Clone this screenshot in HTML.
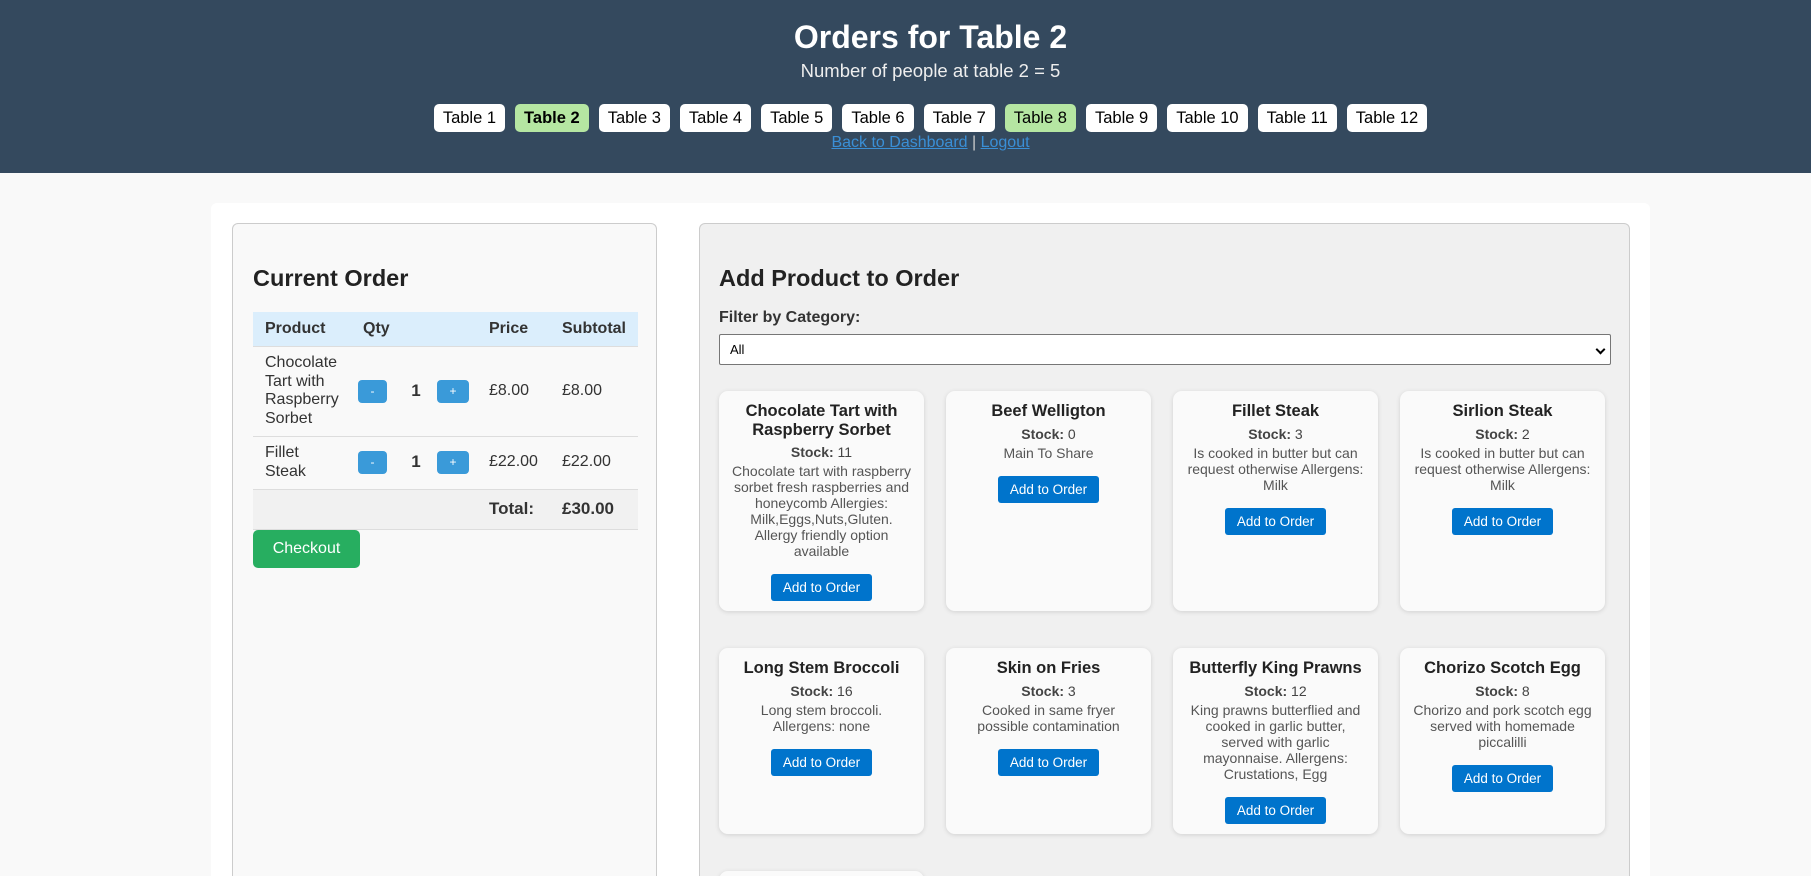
<!DOCTYPE html>
<html style="width:1811px;height:876px;overflow:hidden"><head><meta charset="utf-8">
<style>
*{box-sizing:border-box;margin:0;padding:0}
body{width:1811px;height:876px;overflow:hidden;background:#f9f9f9;font-family:"Liberation Sans",Arial,sans-serif;color:#333;position:relative}
header{background:#34495e;height:173px;text-align:center;color:#fff;padding-top:18px;padding-left:50px}
h1{font-size:32px;line-height:38px;font-weight:bold}
.sub{font-size:18.5px;line-height:22px;margin-top:4px;color:#eee}
.tabs{display:flex;justify-content:center;gap:10px;margin-top:22px}
.tabs span{background:#fff;color:#000;height:28px;line-height:28px;border-radius:5px;padding:0 9px;font-size:16.5px}
.tabs span.g{background:#b5e6a2}
.tabs span.b{font-weight:bold}
.links{font-size:16px;margin-top:2px;color:#ccc}
.links a{color:#3a8fd6;text-decoration:underline}
.main{position:absolute;left:211px;top:203px;width:1439px;height:673px;background:#fff;border-radius:6px 6px 0 0}
.lp{position:absolute;left:232px;top:223px;width:425px;height:653px;background:#f9f9f9;border:1px solid #ccc;border-bottom:none;border-radius:6px 6px 0 0;padding:40px 20px}
.rp{position:absolute;left:699px;top:223px;width:931px;height:653px;overflow:hidden;background:#f0f0f0;border:1px solid #ccc;border-bottom:none;border-radius:6px 6px 0 0;padding:40px 19px}
h2{font-size:23.5px;line-height:28px;font-weight:bold;color:#222}
table{border-collapse:collapse;width:385px;margin-top:20px;font-size:16px;table-layout:fixed}
th{background:#dbeefc;text-align:left;height:34px;padding:0 8px;font-weight:bold}
td{padding:0 8px;border-top:1px solid #ddd;vertical-align:middle;line-height:18.5px}
.sb{display:inline-block;background:#3a9ad9;color:#fff;width:29px;height:23px;border-radius:4px;text-align:center;line-height:23px;font-size:12px}
.sb.p{width:32px}
.co{display:inline-block;background:#27ae60;color:#fff;font-size:16px;width:107px;height:38px;line-height:38px;text-align:center;border-radius:5px}
label{display:block;font-weight:bold;font-size:16px;margin-top:17px}
.sel{margin-top:7px;width:892px;height:31px;background:#fff;border:1px solid #767676;border-radius:2px;font-size:13px;line-height:29px;padding-left:10px;color:#000;position:relative}
.sel:after{content:"";position:absolute;right:6px;top:11px;width:5px;height:5px;border-right:2px solid #000;border-bottom:2px solid #000;transform:rotate(45deg)}
.grid{display:grid;grid-template-columns:repeat(4,205px);column-gap:22px;row-gap:37px;margin-top:26px}
.card{background:#fafafa;border-radius:9px;box-shadow:0 1px 5px rgba(0,0,0,.13);text-align:center;padding:11px 12px 10px}
.card h3{font-size:16.5px;line-height:18.5px;color:#222;margin-bottom:4px}
.card .st{font-size:14px;line-height:18px;color:#444}
.card p{font-size:14px;line-height:16px;color:#555;margin-top:2px}
.card .btn{display:inline-block;background:#0074cc;color:#fff;font-size:13.5px;height:27px;line-height:27px;padding:0 12px;border-radius:3px;margin-top:15px}
.pn{padding:0 20px 0 12px}
</style></head><body>
<header>
<h1>Orders for Table 2</h1>
<div class="sub">Number of people at table 2 = 5</div>
<div class="tabs"><span>Table 1</span><span class="g b">Table 2</span><span>Table 3</span><span>Table 4</span><span>Table 5</span><span>Table 6</span><span>Table 7</span><span class="g">Table 8</span><span>Table 9</span><span>Table 10</span><span>Table 11</span><span>Table 12</span></div>
<div class="links"><a>Back to Dashboard</a> | <a>Logout</a></div>
</header>
<div class="main"></div>
<div class="lp">
<h2>Current Order</h2>
<table>
<colgroup><col style="width:100px"><col style="width:48px"><col style="width:30px"><col style="width:50px"><col style="width:73px"><col></colgroup>
<tr><th style="padding-left:12px">Product</th><th colspan="3" style="padding-left:10px">Qty</th><th>Price</th><th>Subtotal</th></tr>
<tr style="height:90px"><td class="pn">Chocolate Tart with Raspberry Sorbet</td><td style="padding:0 0 0 5px"><span class="sb">-</span></td><td style="padding:0;text-align:center;font-weight:bold;font-size:17px">1</td><td style="padding:0 0 0 6px"><span class="sb p">+</span></td><td>£8.00</td><td>£8.00</td></tr>
<tr style="height:53px"><td class="pn">Fillet<br>Steak</td><td style="padding:0 0 0 5px"><span class="sb">-</span></td><td style="padding:0;text-align:center;font-weight:bold;font-size:17px">1</td><td style="padding:0 0 0 6px"><span class="sb p">+</span></td><td>£22.00</td><td>£22.00</td></tr>
<tr style="height:40px;background:#f1f1f1;font-weight:bold;font-size:17px"><td colspan="4"></td><td>Total:</td><td>£30.00</td></tr>
<tr><td colspan="6" style="padding:0"></td></tr>
</table>
<div class="co">Checkout</div>
</div>
<div class="rp">
<h2>Add Product to Order</h2>
<label>Filter by Category:</label>
<div class="sel">All</div>
<div class="grid">
<div class="card"><h3>Chocolate Tart with Raspberry Sorbet</h3><div class="st"><b>Stock:</b> 11</div><p>Chocolate tart with raspberry sorbet fresh raspberries and honeycomb Allergies: Milk,Eggs,Nuts,Gluten. Allergy friendly option available</p><span class="btn">Add to Order</span></div>
<div class="card"><h3>Beef Welligton</h3><div class="st"><b>Stock:</b> 0</div><p>Main To Share</p><span class="btn">Add to Order</span></div>
<div class="card"><h3>Fillet Steak</h3><div class="st"><b>Stock:</b> 3</div><p>Is cooked in butter but can request otherwise Allergens: Milk</p><span class="btn">Add to Order</span></div>
<div class="card"><h3>Sirlion Steak</h3><div class="st"><b>Stock:</b> 2</div><p>Is cooked in butter but can request otherwise Allergens: Milk</p><span class="btn">Add to Order</span></div>
<div class="card"><h3>Long Stem Broccoli</h3><div class="st"><b>Stock:</b> 16</div><p>Long stem broccoli. Allergens: none</p><span class="btn">Add to Order</span></div>
<div class="card"><h3>Skin on Fries</h3><div class="st"><b>Stock:</b> 3</div><p>Cooked in same fryer possible contamination</p><span class="btn">Add to Order</span></div>
<div class="card"><h3>Butterfly King Prawns</h3><div class="st"><b>Stock:</b> 12</div><p>King prawns butterflied and cooked in garlic butter, served with garlic mayonnaise. Allergens: Crustations, Egg</p><span class="btn">Add to Order</span></div>
<div class="card"><h3>Chorizo Scotch Egg</h3><div class="st"><b>Stock:</b> 8</div><p>Chorizo and pork scotch egg served with homemade piccalilli</p><span class="btn">Add to Order</span></div>
<div class="card" style="height:60px"></div>
</div>
</div>
</body></html>
